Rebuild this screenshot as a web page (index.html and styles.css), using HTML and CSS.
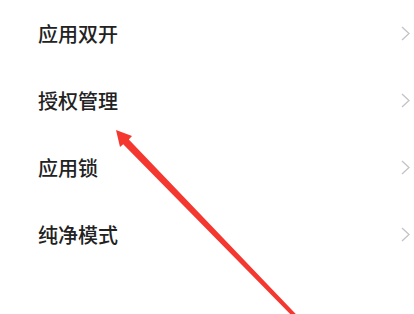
FILE: index.html
```html
<!DOCTYPE html>
<html lang="zh-CN">
<head>
<meta charset="utf-8">
<link rel="stylesheet" href="styles.css">
</head>
<body>
<div class="page">
  <ul class="menu">
    <li class="row"><span class="label">应用双开</span><svg class="chev" viewBox="0 0 9 15"><path d="M1 1 L8 7.5 L1 14" fill="none" stroke="#c4c4c4" stroke-width="1.3"/></svg></li>
    <li class="row"><span class="label">授权管理</span><svg class="chev" viewBox="0 0 9 15"><path d="M1 1 L8 7.5 L1 14" fill="none" stroke="#c4c4c4" stroke-width="1.3"/></svg></li>
    <li class="row"><span class="label">应用锁</span><svg class="chev" viewBox="0 0 9 15"><path d="M1 1 L8 7.5 L1 14" fill="none" stroke="#c4c4c4" stroke-width="1.3"/></svg></li>
    <li class="row"><span class="label">纯净模式</span><svg class="chev" viewBox="0 0 9 15"><path d="M1 1 L8 7.5 L1 14" fill="none" stroke="#c4c4c4" stroke-width="1.3"/></svg></li>
  </ul>
  <svg class="arrow" viewBox="0 0 414 314" width="414" height="314">
    <polygon fill="#f4372f" points="116,130 132,136 128.8,139.4 300.2,318.6 297.4,321.4 123.2,144.2 120,147"/>
  </svg>
</div>
</body>
</html>
```
FILE: styles.css
```css
html, body {
  margin: 0;
  padding: 0;
  background: #ffffff;
}
.page {
  position: relative;
  width: 414px;
  height: 314px;
  overflow: hidden;
  font-family: "Noto Sans CJK SC", "Noto Sans", sans-serif;
}
.menu {
  list-style: none;
  margin: 0;
  padding: 0;
}
.row {
  height: 67px;
  display: flex;
  align-items: center;
  justify-content: space-between;
  padding: 0 4px 0 38px;
}
.label {
  font-size: 20px;
  font-weight: 500;
  color: #222222;
  line-height: 1;
}
.chev {
  width: 9px;
  height: 15px;
  display: block;
}
.arrow {
  position: absolute;
  left: 0;
  top: 0;
}
```
